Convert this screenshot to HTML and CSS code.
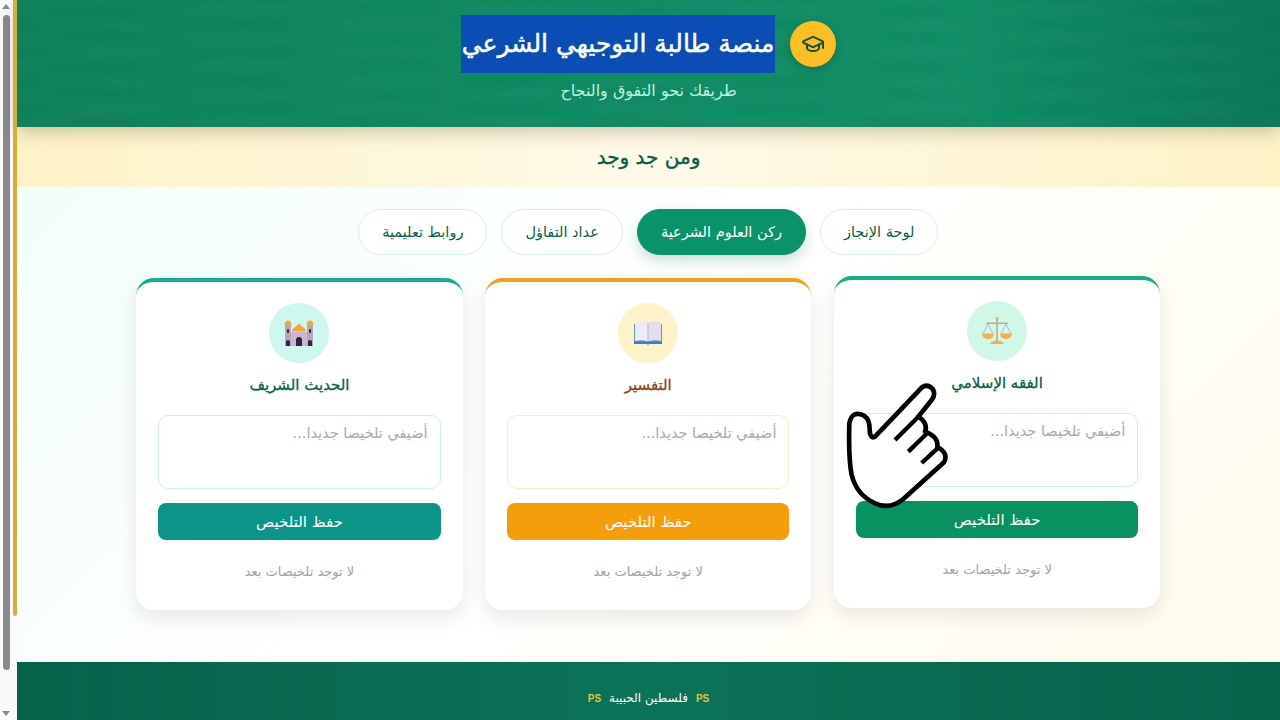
FILE: index.html
```html
<!DOCTYPE html>
<html lang="ar" dir="rtl">
<head>
    <meta charset="UTF-8">
    <meta name="viewport" content="width=device-width, initial-scale=1.0">
    <title>منصة طالبة التوجيهي الشرعي</title>
    <link rel="stylesheet" href="styles.css">
</head>
<body>
<div class="page">
    <header class="top">
        <div class="top_row">
            <span class="top_icon">
                <svg width="24" height="24" viewBox="0 0 24 24" fill="none" stroke="#14532d" stroke-width="2" stroke-linecap="round" stroke-linejoin="round">
                    <path d="M21.4 10.9a1 1 0 0 0 0-1.8l-8.6-3.9a2 2 0 0 0-1.6 0L2.6 9.1a1 1 0 0 0 0 1.8l8.6 3.9a2 2 0 0 0 1.6 0z"/>
                    <path d="M22 10v6"/>
                    <path d="M6 12.5V16a6 3 0 0 0 12 0v-3.5"/>
                </svg>
            </span>
            <h1 class="top_title"><span class="selected">منصة طالبة التوجيهي الشرعي</span></h1>
        </div>
        <p class="top_sub">طريقك نحو التفوق والنجاح</p>
    </header>

    <div class="motto">ومن جد وجد</div>

    <main class="content">
        <nav class="tabs">
            <button class="tab" type="button">لوحة الإنجاز</button>
            <button class="tab tab_on" type="button">ركن العلوم الشرعية</button>
            <button class="tab" type="button">عداد التفاؤل</button>
            <button class="tab" type="button">روابط تعليمية</button>
        </nav>

        <section class="cards">
            <article class="card card_green card_lift">
                <span class="card_icon">
                    <svg width="32" height="32" viewBox="0 0 32 32">
                        <rect x="15.2" y="3" width="1.6" height="23" fill="#b9a9a0"/>
                        <rect x="5" y="7.5" width="22" height="1.5" rx=".7" fill="#b9a9a0"/>
                        <circle cx="16" cy="3.500" r="1.6" fill="#f4b04f"/>
                        <path d="M7 9 2 19M7 9l5 10M25 9l-5 10M25 9l5 10" stroke="#a9a3a8" stroke-width=".7" fill="none"/>
                        <path d="M1 18.500h12a6 5.500 0 0 1-12 0zM19 18.500h12a6 5.500 0 0 1-12 0z" fill="#f4b04f"/>
                        <path d="M9 29c1-2.500 5-3.500 7-3.500s6 1 7 3.500z" fill="#f4b04f"/>
                    </svg>
                </span>
                <h3 class="card_title">الفقه الإسلامي</h3>
                <textarea class="card_text" placeholder="أضيفي تلخيصا جديدا..."></textarea>
                <button class="card_save" type="button">حفظ التلخيص</button>
                <p class="card_empty">لا توجد تلخيصات بعد</p>
            </article>

            <article class="card card_gold">
                <span class="card_icon">
                    <svg width="32" height="32" viewBox="0 0 32 32">
                        <path d="M2 7h28v19H2z" fill="#5b9bd5"/>
                        <path d="M3 5c5-1 10-1 13 1v19c-3-2-8-2-13-1z" fill="#eeeaf6"/>
                        <path d="M29 5c-5-1-10-1-13 1v19c3-2 8-2 13-1z" fill="#e3dff0"/>
                        <path d="M15.500 6h1v19h-1z" fill="#b5b1c8"/>
                        <path d="M2 24.500h28V27H17l-1 1-1-1H2z" fill="#3f7fc0"/>
                    </svg>
                </span>
                <h3 class="card_title">التفسير</h3>
                <textarea class="card_text" placeholder="أضيفي تلخيصا جديدا..."></textarea>
                <button class="card_save" type="button">حفظ التلخيص</button>
                <p class="card_empty">لا توجد تلخيصات بعد</p>
            </article>

            <article class="card card_teal">
                <span class="card_icon">
                    <svg width="32" height="32" viewBox="0 0 32 32">
                        <rect x="2" y="8" width="6" height="21" fill="#b7a6bb"/>
                        <rect x="24" y="8" width="6" height="21" fill="#b7a6bb"/>
                        <rect x="8" y="15" width="16" height="14" fill="#c9b9cc"/>
                        <path d="M1.500 8a3.500 4.500 0 0 1 7 0zM23.500 8a3.500 4.500 0 0 1 7 0z" fill="#f0a93f"/>
                        <path d="M9 14.500c0-3.500 4-4.500 7-8 3 3.500 7 4.500 7 8z" fill="#f0a93f"/>
                        <path d="M3 29v-4a2 2 0 0 1 4 0v4zM13 29v-6a3 3 0 0 1 6 0v6zM25 29v-4a2 2 0 0 1 4 0v4z" fill="#3a1a4a"/>
                        <rect x="4" y="12" width="2" height="4" rx="1" fill="#3a1a4a"/>
                        <rect x="26" y="12" width="2" height="4" rx="1" fill="#3a1a4a"/>
                    </svg>
                </span>
                <h3 class="card_title">الحديث الشريف</h3>
                <textarea class="card_text" placeholder="أضيفي تلخيصا جديدا..."></textarea>
                <button class="card_save" type="button">حفظ التلخيص</button>
                <p class="card_empty">لا توجد تلخيصات بعد</p>
            </article>
        </section>
    </main>

    <footer class="bottom">
        <span class="flag">PS</span>
        <span class="bottom_text">فلسطين الحبيبة</span>
        <span class="flag">PS</span>
    </footer>
</div>

<div class="progress"></div>

<div class="scroll">
    <span class="scroll_up"></span>
    <span class="scroll_thumb"></span>
    <span class="scroll_down"></span>
</div>

<svg class="hand" width="120" height="140" viewBox="0 0 360 420">
    <path d="M105 185 245 38Q262 25 278 42 288 58 275 75L235 125Q265 145 255 170 296 185 292 216 327 235 312 262L190 372Q150 405 105 385 50 360 35 300 25 250 28 145 35 110 62 118 85 125 88 150L90 175Q95 192 105 185Z" fill="#fff" stroke="#000" stroke-width="14" stroke-linejoin="round"/>
    <path d="M165 195 235 125M205 230 262 174M245 264 295 218" fill="none" stroke="#000" stroke-width="13"/>
</svg>
</body>
</html>
```

FILE: styles.css
```css
*{
    box-sizing: border-box;
    font-family: "DejaVu Sans", sans-serif;
}
html, body{
    margin: 0;
    height: 720px;
    overflow: hidden;
}
.page{
    margin-left: 17px;
    height: 720px;
    display: flex;
    flex-direction: column;
    background: linear-gradient(135deg, #effdf8, #ffffff 50%, #fffbeb);
}
.top{
    height: 127px;
    padding-top: 15px;
    display: flex;
    flex-direction: column;
    align-items: center;
    color: #fff;
    background:
        repeating-linear-gradient(6deg, rgba(255,255,255,.016) 0, transparent 14px, rgba(255,255,255,.016) 28px),
        repeating-linear-gradient(-6deg, rgba(255,255,255,.016) 0, transparent 14px, rgba(255,255,255,.016) 28px),
        linear-gradient(90deg, #0c8059, #0e8a63 50%, #0e8c64 75%, #087656);
    box-shadow: 0 4px 18px rgba(60,50,10,.28);
    position: relative;
}
.top_row{
    display: flex;
    align-items: center;
    gap: 15px;
}
.top_icon{
    width: 46px;
    height: 46px;
    border-radius: 50%;
    background: #fbbf24;
    display: flex;
    align-items: center;
    justify-content: center;
    box-shadow: 0 3px 8px rgba(0,0,0,.18);
}
.top_title{
    margin: 0;
    font-size: 25px;
    font-weight: normal;
    line-height: 58px;
    -webkit-text-stroke: .5px #fff;
}
.selected{
    display: block;
    width: 314px;
    height: 58px;
    text-align: center;
    white-space: nowrap;
    background: #0b4db5;
}
.top_sub{
    margin: 7px 0 0;
    font-size: 16px;
    line-height: 22px;
    color: #bdf3dc;
}
.motto{
    height: 60px;
    display: flex;
    align-items: center;
    justify-content: center;
    font-size: 20px;
    color: #065f46;
    -webkit-text-stroke: .4px #065f46;
    background: linear-gradient(90deg, #fef3c7, #fff9e8 50%, #fef3c7);
}
.content{
    flex: 1;
    padding: 22px .5px 0 0;
    display: flex;
    flex-direction: column;
    align-items: center;
}
.tabs{
    display: flex;
    gap: 14px;
}
.tab{
    height: 46px;
    padding: 0 23px;
    border: 1px solid #d5f1e8;
    border-radius: 23px;
    background: #fff;
    color: #065f46;
    font-size: 14.5px;
}
.tab_on{
    border-color: #0a9268;
    background: #0a9268;
    color: #fff;
    box-shadow: 0 6px 14px rgba(6,95,70,.2);
}
.cards{
    width: 1024px;
    margin-top: 23px;
    display: grid;
    grid-template-columns: repeat(3, 1fr);
    gap: 22.5px;
}
.card{
    height: 332px;
    padding: 21px 22px 0;
    display: flex;
    flex-direction: column;
    align-items: center;
    background: #fff;
    border-top: 4px solid;
    border-radius: 18px;
    box-shadow: 0 8px 20px rgba(0,0,0,.09);
}
.card_lift{
    transform: translateY(-2px);
}
.card_green{ border-top-color: #10b084; }
.card_gold{ border-top-color: #efa31c; }
.card_teal{ border-top-color: #17ab96; }
.card_icon{
    width: 60px;
    height: 60px;
    border-radius: 50%;
    display: flex;
    align-items: center;
    justify-content: center;
}
.card_green .card_icon{ background: #d1f7e6; }
.card_gold .card_icon{ background: #fdf2c8; }
.card_teal .card_icon{ background: #cdf7ef; }
.card_title{
    margin: 8px 0 0;
    height: 44px;
    font-size: 15px;
    font-weight: normal;
    line-height: 28px;
    color: #065f46;
    -webkit-text-stroke: .3px #065f46;
}
.card_gold .card_title{
    color: #92400e;
    -webkit-text-stroke-color: #92400e;
}
.card_text{
    width: 100%;
    height: 74px;
    padding: 9px 12px;
    display: block;
    resize: none;
    border: 1px solid #cdf1e8;
    border-radius: 10px;
    background: #fff;
    font-size: 14.5px;
}
.card_gold .card_text{ border-color: #f9edc4; }
.card_text::placeholder{
    color: #a8a8ae;
}
.card_save{
    width: 100%;
    height: 37px;
    margin-top: 14px;
    border: none;
    border-radius: 8px;
    color: #fff;
    font-size: 15px;
}
.card_green .card_save{ background: #09915f; }
.card_gold .card_save{ background: #f59e0b; }
.card_teal .card_save{ background: #0d9488; }
.card_empty{
    margin: 24px 0 0;
    font-size: 13px;
    color: #a3a3ab;
}
.bottom{
    height: 58px;
    display: flex;
    align-items: center;
    justify-content: center;
    gap: 8px;
    padding-top: 14px;
    background: linear-gradient(90deg, #07624a, #0c7358 50%, #07624a);
}
.bottom_text{
    font-size: 12px;
    color: #fff;
}
.flag{
    font-family: "Liberation Sans", sans-serif;
    font-size: 10px;
    font-weight: bold;
    color: #e2c33c;
}
.progress{
    position: absolute;
    left: 13px;
    top: 0;
    width: 4px;
    height: 616px;
    background: #d4af37;
    border-radius: 0 0 2px 2px;
}
.scroll{
    position: absolute;
    left: 0;
    top: 0;
    width: 17px;
    height: 720px;
    background: #fafafa;
    z-index: -1;
}
.scroll_up, .scroll_down{
    position: absolute;
    left: 2px;
    width: 0;
    height: 0;
    border-left: 4px solid transparent;
    border-right: 4px solid transparent;
}
.scroll_up{
    top: 4px;
    border-bottom: 5px solid #8a8a8e;
}
.scroll_down{
    top: 711px;
    border-top: 5px solid #8a8a8e;
}
.scroll_thumb{
    position: absolute;
    left: 3px;
    top: 15px;
    width: 7px;
    height: 655px;
    border-radius: 4px;
    background: #8a8a8e;
}
.hand{
    position: absolute;
    left: 840px;
    top: 375px;
}
```
